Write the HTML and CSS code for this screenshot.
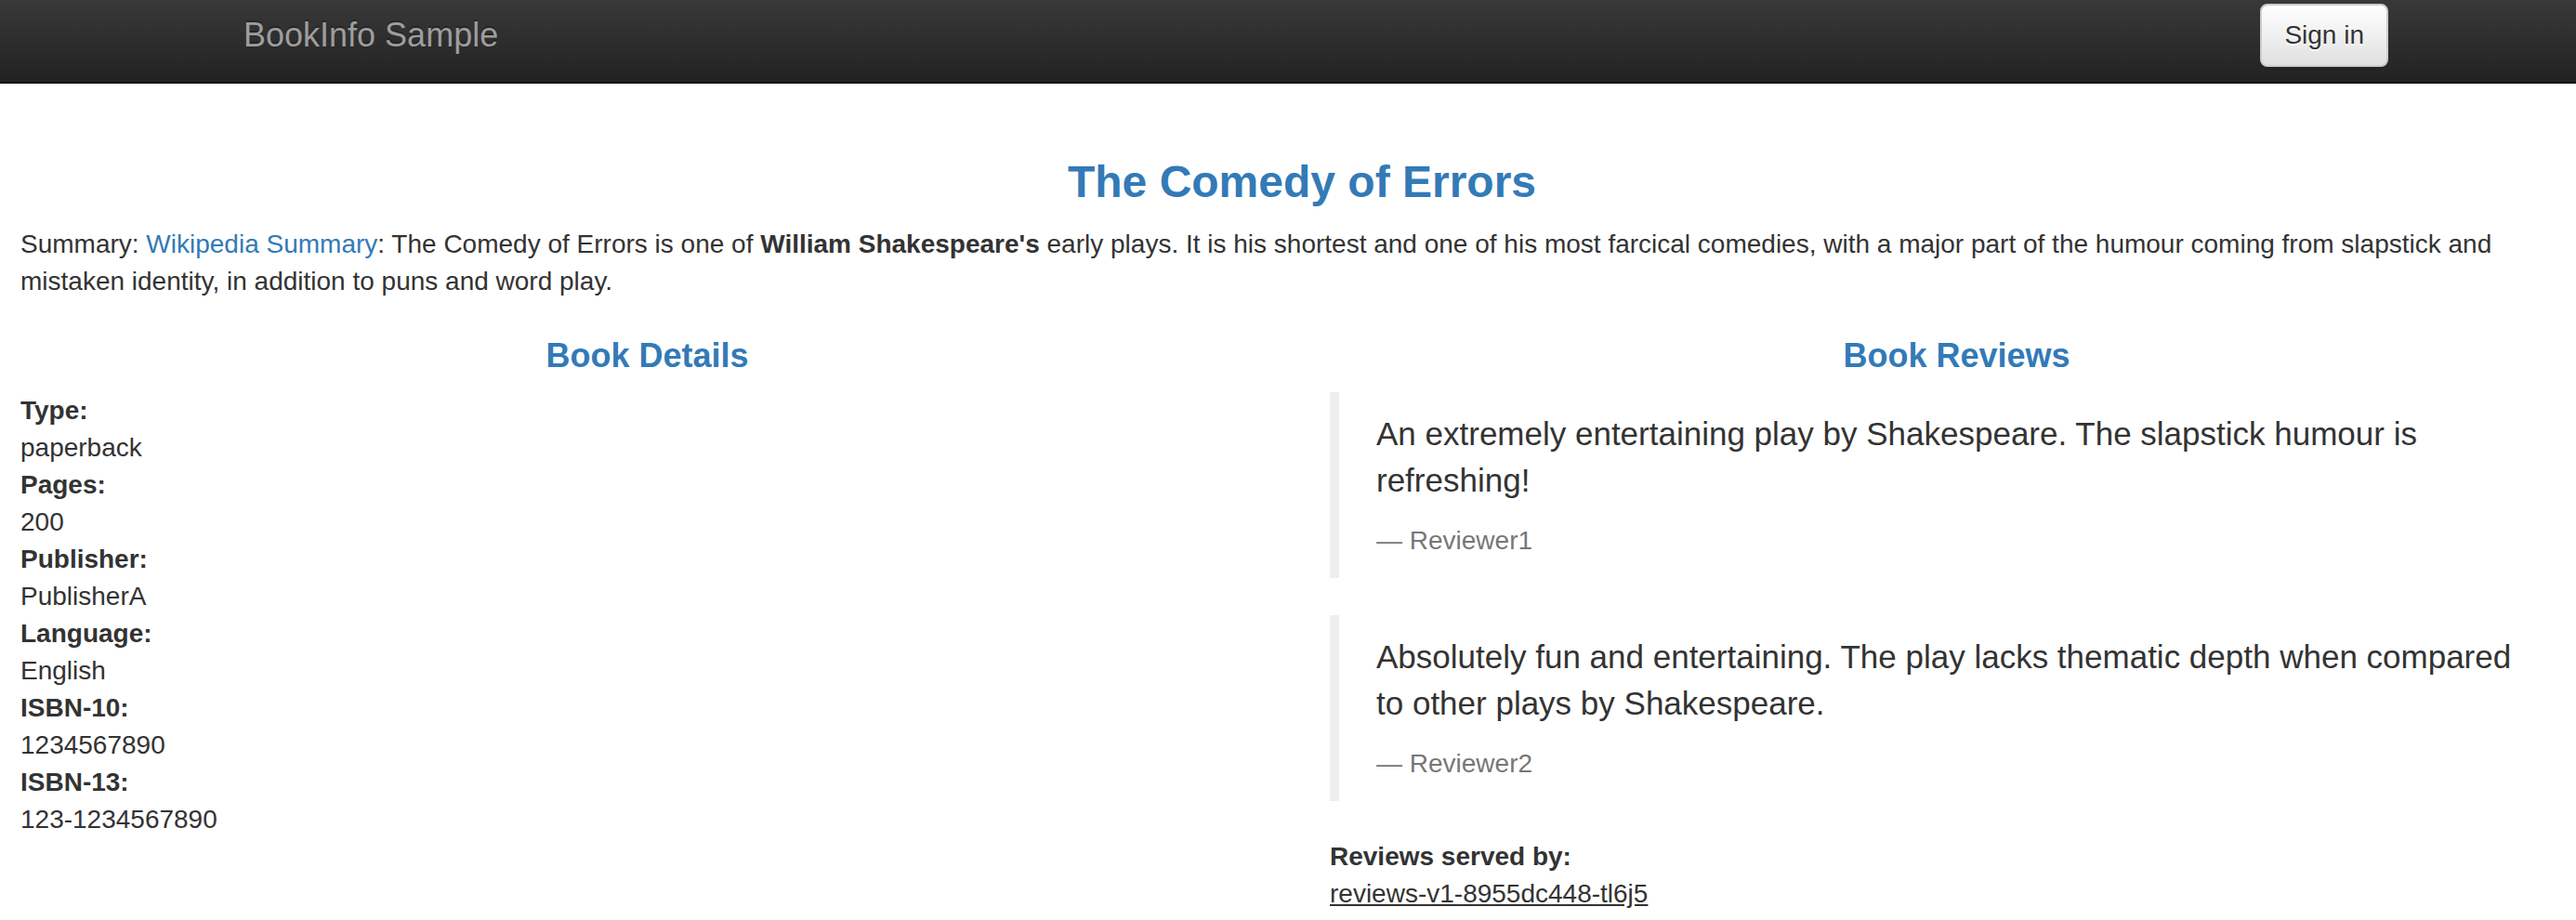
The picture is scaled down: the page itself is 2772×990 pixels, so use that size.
FILE: index.html
```html
<!DOCTYPE html>
<html lang="en">
<head>
<meta charset="utf-8">
<title>Simple Bookstore App</title>
<link rel="stylesheet" href="styles.css">
</head>
<body>
<nav class="navbar">
  <div class="navbar-inner">
    <a class="navbar-brand" href="#">BookInfo Sample</a>
    <button type="button" class="btn-signin">Sign in</button>
  </div>
</nav>
<div class="main">
  <div class="row">
    <div class="col-12">
      <h3 class="title">The Comedy of Errors</h3>
      <p class="summary">Summary: <a href="#">Wikipedia Summary</a>: The Comedy of Errors is one of <b>William Shakespeare's</b> early plays. It is his shortest and one of his most farcical comedies, with a major part of the humour coming from slapstick and mistaken identity, in addition to puns and word play.</p>
    </div>
  </div>
  <div class="row">
    <div class="col-6">
      <h4 class="section-title details-title">Book Details</h4>
      <dl class="details">
        <dt>Type:</dt>paperback
        <dt>Pages:</dt>200
        <dt>Publisher:</dt>PublisherA
        <dt>Language:</dt>English
        <dt>ISBN-10:</dt>1234567890
        <dt>ISBN-13:</dt>123-1234567890
      </dl>
    </div>
    <div class="col-6">
      <h4 class="section-title reviews-title">Book Reviews</h4>
      <blockquote class="review">
        <p>An extremely entertaining play by Shakespeare. The slapstick humour is refreshing!</p>
        <footer>Reviewer1</footer>
      </blockquote>
      <blockquote class="review">
        <p>Absolutely fun and entertaining. The play lacks thematic depth when compared to other plays by Shakespeare.</p>
        <footer>Reviewer2</footer>
      </blockquote>
      <dl class="details">
        <dt>Reviews served by:</dt>
        <u>reviews-v1-8955dc448-tl6j5</u>
      </dl>
    </div>
  </div>
</div>
</body>
</html>
```
FILE: styles.css
```css
html {
  overflow: hidden;
}
* {
  box-sizing: border-box;
}
body {
  margin: 0;
  font-family: "Liberation Sans", Arial, Helvetica, sans-serif;
  font-size: 28px;
  line-height: 40px;
  color: #333;
  background: #fff;
}
a {
  color: #337ab7;
  text-decoration: none;
}

/* navbar */
.navbar {
  height: 90px;
  background: linear-gradient(to bottom, #393939 0%, #222 100%);
  border-bottom: 2px solid #080808;
  margin-bottom: 40px;
}
.navbar-inner {
  display: flex;
  justify-content: space-between;
  align-items: flex-start;
  padding: 0 202px 0 262px;
}
.navbar-brand {
  margin-top: 18px;
  font-size: 36px;
  line-height: 40px;
  color: #9d9d9d;
  text-shadow: 0 -2px 0 rgba(0, 0, 0, 0.25);
}
.btn-signin {
  margin-top: 4px;
  height: 68px;
  padding: 12px 24px;
  font-family: inherit;
  font-size: 28px;
  line-height: 40px;
  color: #333;
  background: linear-gradient(to bottom, #fff 0%, #e0e0e0 100%);
  border: 2px solid #ccc;
  border-radius: 8px;
  text-shadow: 0 2px 0 #fff;
  box-shadow: inset 0 2px 0 rgba(255, 255, 255, 0.15), 0 2px 2px rgba(0, 0, 0, 0.075);
}

/* layout */
.main {
  width: 2818px;
  margin-left: -8px;
}
.row {
  display: flex;
}
.col-12 {
  flex: 0 0 100%;
  padding: 0 30px;
}
.col-6 {
  flex: 0 0 50%;
  padding: 0 30px;
}

/* text */
.title {
  margin: 40px 0 20px;
  font-size: 48px;
  line-height: 1.1;
  font-weight: 700;
  color: #337ab7;
  text-align: center;
}
.summary {
  margin: 0;
}
.section-title {
  margin: 40px 0 20px;
  font-size: 36px;
  line-height: 1.1;
  font-weight: 700;
  color: #337ab7;
  text-align: center;
}
.details {
  margin: 0 0 40px;
}
.details dt {
  font-weight: 700;
}

/* reviews */
.review {
  margin: 0 0 40px;
  padding: 20px 40px;
  border-left: 10px solid #eee;
  font-size: 35px;
}
.review p {
  margin: 0 0 20px;
  line-height: 50px;
}
.review footer {
  font-size: 28px;
  line-height: 40px;
  color: #777;
}
.review footer::before {
  content: "\2014\00A0";
}
```
